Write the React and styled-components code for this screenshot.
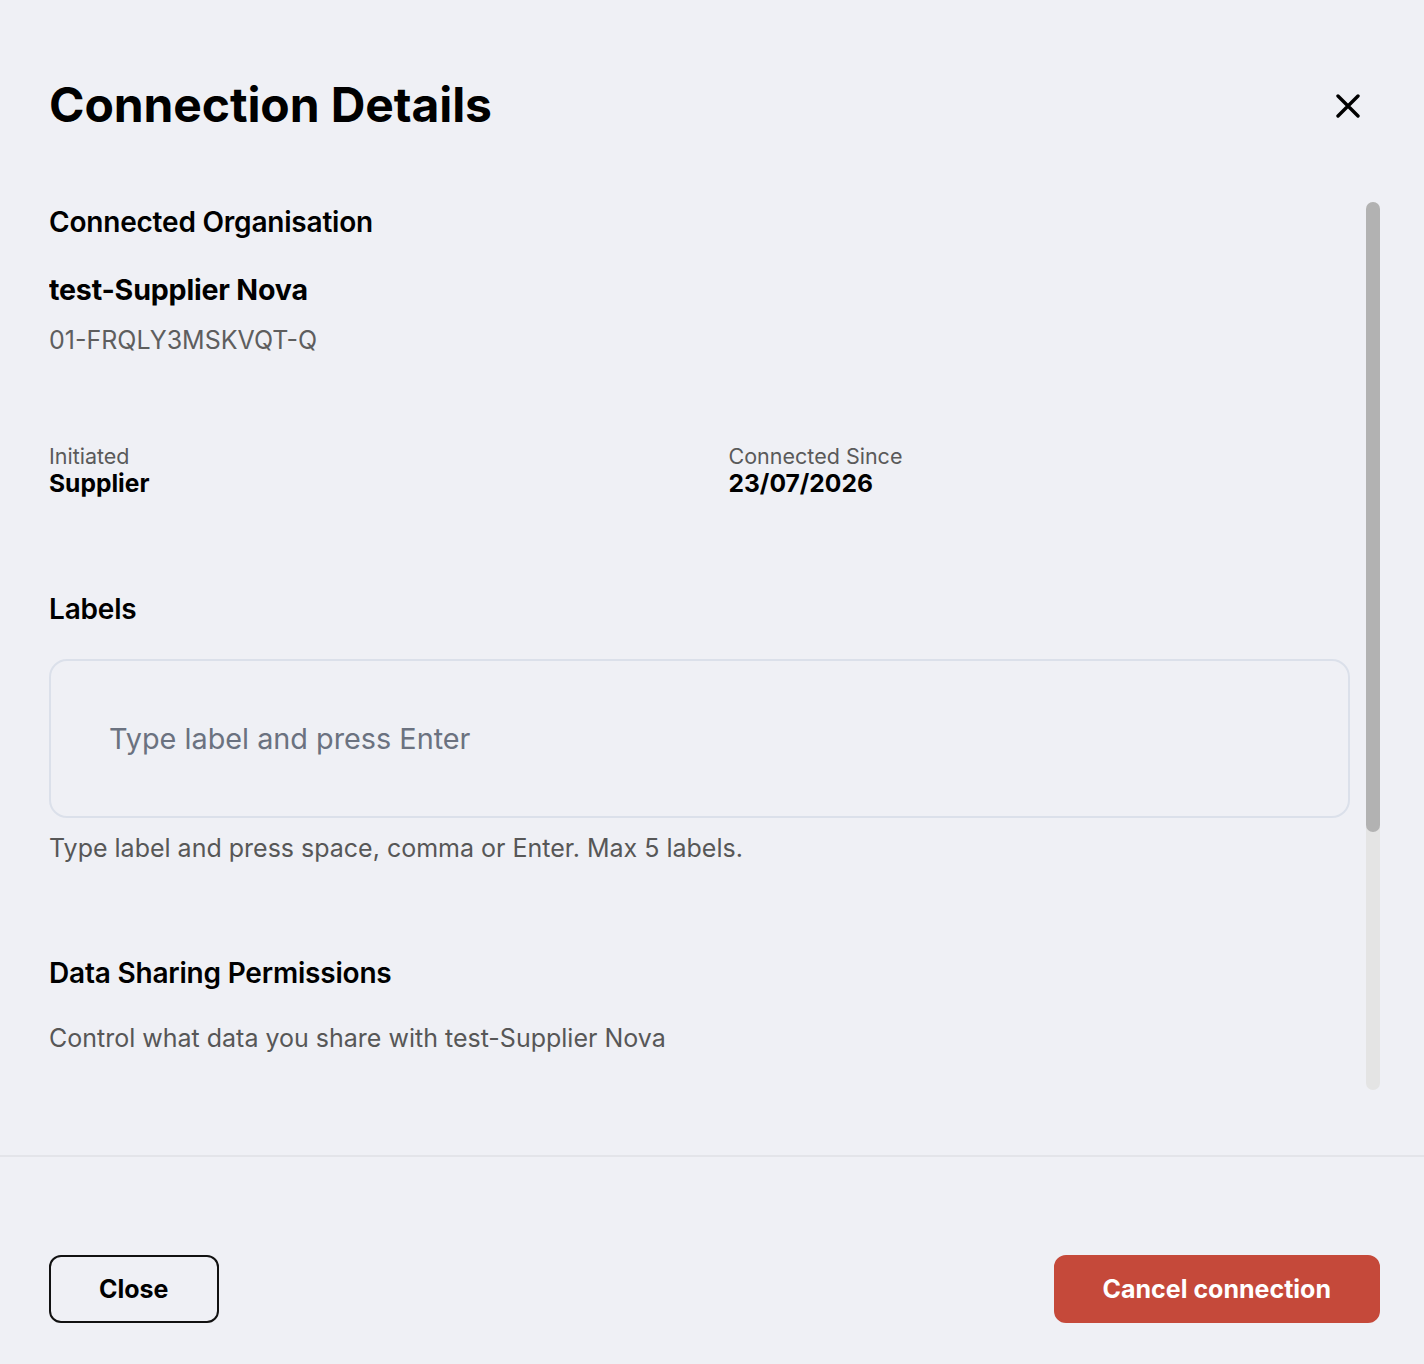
import React from "react";
import styled, { createGlobalStyle } from "styled-components";

const GlobalStyle = createGlobalStyle`
  *, *::before, *::after { box-sizing: border-box; }
  html, body { margin: 0; padding: 0; background: #eff0f5; }
  body {
    font-family: Inter, "Noto Sans", "Liberation Sans", sans-serif;
    color: #000;
    -webkit-font-smoothing: antialiased;
  }
`;

const Dialog = styled.div`
  width: 100%;
  min-height: 100vh;
  background: #eff0f5;
  display: flex;
  flex-direction: column;
`;

const Header = styled.header`
  display: flex;
  align-items: center;
  justify-content: space-between;
  padding: 74px 64px 0 49px;
`;

const Title = styled.h1`
  margin: 0;
  font-size: 48px;
  line-height: 62px;
  font-weight: 700;
  letter-spacing: -0.1px;
`;

const IconButton = styled.button`
  width: 24px;
  height: 24px;
  padding: 0;
  border: 0;
  background: transparent;
  display: flex;
  align-items: center;
  justify-content: center;
  cursor: pointer;
  margin-top: 2px;
`;

const ScrollRegion = styled.div`
  margin: 66px 44px 0 49px;
  height: 888px;
  display: flex;
  gap: 16px;
`;

const ScrollViewport = styled.div`
  flex: 1;
  min-width: 0;
  overflow-y: auto;
  scrollbar-width: none;
  &::-webkit-scrollbar {
    display: none;
  }
`;

const ScrollTrack = styled.div`
  flex: none;
  width: 14px;
  border-radius: 7px;
  background: #e4e4e4;
  display: flex;
  flex-direction: column;
`;

const ScrollThumb = styled.div`
  width: 100%;
  height: ${(p) => p.$size * 100}%;
  border-radius: 7px;
  background: #b2b2b2;
`;

const Content = styled.div`
  padding-top: 3px;
  display: flex;
  flex-direction: column;
`;

const SectionTitle = styled.h2`
  margin: ${(p) => p.$mt || 0}px 0 0;
  font-size: 28px;
  line-height: 34px;
  font-weight: 600;
  letter-spacing: -0.2px;
`;

const OrgName = styled.div`
  margin-top: 34px;
  font-size: 28.6px;
  line-height: 34px;
  font-weight: 700;
  letter-spacing: -0.2px;
`;

const OrgId = styled.div`
  margin-top: 19px;
  font-size: 25px;
  line-height: 29px;
  color: #5e5e5e;
`;

const MetaGrid = styled.div`
  margin-top: 88px;
  display: grid;
  grid-template-columns: 1fr 1fr;
  column-gap: 58px;
`;

const MetaItem = styled.div`
  display: flex;
  flex-direction: column;
`;

const MetaLabel = styled.span`
  font-size: 21.5px;
  line-height: 26px;
  color: #5a5a5a;
`;

const MetaValue = styled.span`
  font-size: 24.6px;
  line-height: 29px;
  font-weight: 700;
`;

const LabelInput = styled.input`
  margin-top: 33px;
  width: 100%;
  height: 159px;
  border: 2px solid #dbe0ea;
  border-radius: 18px;
  background: transparent;
  padding: 0 0 0 58px;
  font-family: inherit;
  font-size: 28.8px;
  color: #111;
  outline: none;

  &::placeholder {
    color: #6b7280;
  }
`;

const Helper = styled.p`
  margin: ${(p) => p.$mt || 0}px 0 0;
  font-size: 25px;
  line-height: 29px;
  color: #575757;
`;

const Footer = styled.footer`
  margin-top: 65px;
  border-top: 2px solid #e3e4e9;
  padding: 98px 44px 42px 49px;
  display: flex;
  align-items: center;
  justify-content: space-between;
`;

const Button = styled.button`
  height: 68px;
  padding: 0 ${(p) => (p.$danger ? 47 : 48)}px;
  border-radius: 12px;
  font-family: inherit;
  font-size: 25px;
  font-weight: 700;
  cursor: pointer;
  border: 2px solid ${(p) => (p.$danger ? "#c5493a" : "#111")};
  background: ${(p) => (p.$danger ? "#c5493a" : "transparent")};
  color: ${(p) => (p.$danger ? "#fff" : "#000")};
`;

const CloseIcon = () => (
  <svg width="24" height="24" viewBox="0 0 24 24" fill="none">
    <path
      d="M2 2L22 22M22 2L2 22"
      stroke="#000"
      strokeWidth="3.4"
      strokeLinecap="round"
    />
  </svg>
);

export default function App() {
  return (
    <>
      <GlobalStyle />
      <Dialog>
        <Header>
          <Title>Connection Details</Title>
          <IconButton aria-label="Close">
            <CloseIcon />
          </IconButton>
        </Header>

        <ScrollRegion>
          <ScrollViewport>
            <Content>
              <SectionTitle>Connected Organisation</SectionTitle>
              <OrgName>test-Supplier Nova</OrgName>
              <OrgId>01-FRQLY3MSKVQT-Q</OrgId>

              <MetaGrid>
                <MetaItem>
                  <MetaLabel>Initiated</MetaLabel>
                  <MetaValue>Supplier</MetaValue>
                </MetaItem>
                <MetaItem>
                  <MetaLabel>Connected Since</MetaLabel>
                  <MetaValue>23/07/2026</MetaValue>
                </MetaItem>
              </MetaGrid>

              <SectionTitle $mt={94}>Labels</SectionTitle>
              <LabelInput placeholder="Type label and press Enter" />
              <Helper $mt={16}>
                Type label and press space, comma or Enter. Max 5 labels.
              </Helper>

              <SectionTitle $mt={93}>Data Sharing Permissions</SectionTitle>
              <Helper $mt={34}>
                Control what data you share with test-Supplier Nova
              </Helper>
            </Content>
          </ScrollViewport>
          <ScrollTrack>
            <ScrollThumb $size={0.71} />
          </ScrollTrack>
        </ScrollRegion>

        <Footer>
          <Button>Close</Button>
          <Button $danger>Cancel connection</Button>
        </Footer>
      </Dialog>
    </>
  );
}
